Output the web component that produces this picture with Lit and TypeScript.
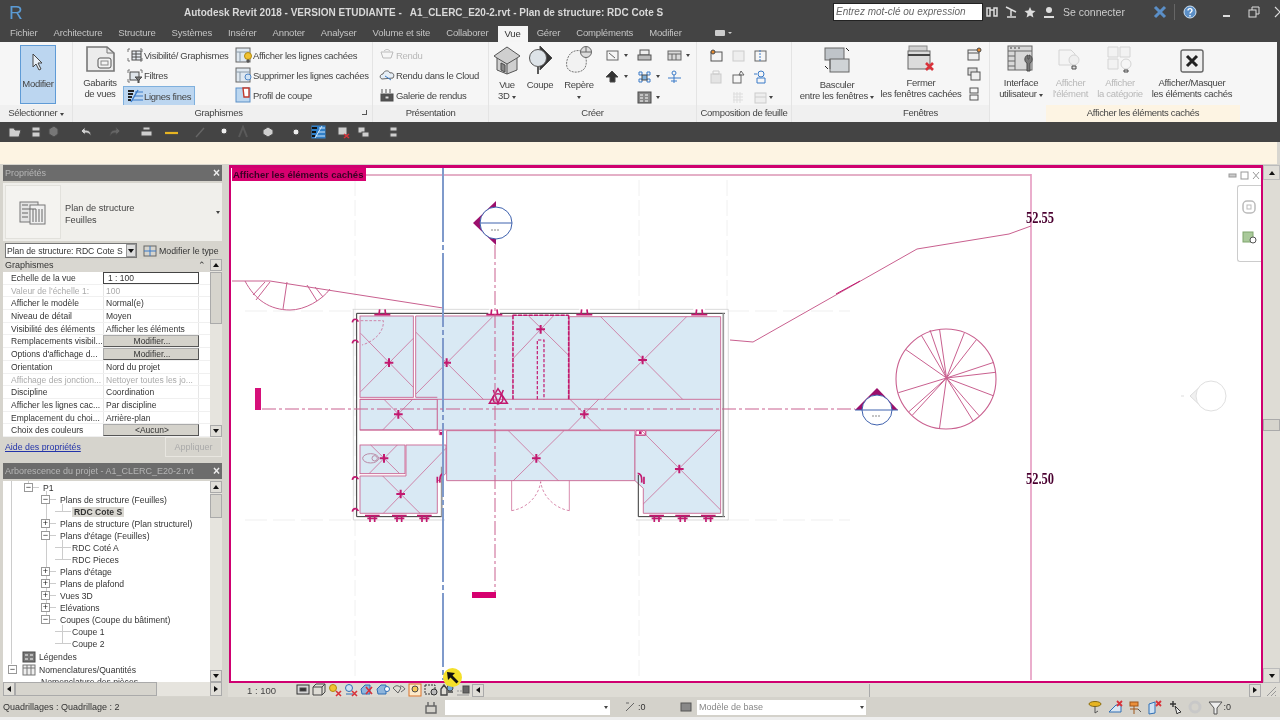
import { LitElement, css, html, svg } from "lit";
import { customElement } from "lit/decorators.js";

const ink = "#4a4a4a";
const red = "#d8323a";
const pink = "#c2186f";
const line = "#c9608f";

// small wrapper so every icon is written the same way
const ico = (w: number, h: number, body: unknown, cls = "") =>
  html`<svg class="ico ${cls}" width=${w} height=${h} viewBox="0 0 ${w} ${h}" fill="none" stroke=${ink} stroke-width="1">${body}</svg>`;

const caret = html`<span class="caret"></span>`;

const icons: Record<string, unknown> = {
  vis: ico(16, 14, svg`<path d="M3 1H1v3M13 1h2v3M3 13H1v-3M13 13h2v-3" stroke="#777"/><rect x="5" y="3" width="9" height="9" fill="#e8edf2"/><path d="M5 6h9M5 9h9M9 3v9"/>`),
  filter: ico(16, 14, svg`<path d="M3 1H1v3M13 1h2v3M3 13H1v-3" stroke="#777"/><rect x="3" y="3" width="9" height="8" fill="#dfe5ea"/><path d="M8 8h7l-3 3v3h-1v-3z" fill="#777"/>`),
  fine: ico(16, 14, svg`<path d="M1 2h6M1 5h5M1 8h4M1 11h3" stroke="#222" stroke-width="1.8"/><path d="M4 13L11 1" stroke="#3a7bc8" stroke-width="1.4"/><path d="M8 3h8M7 7h9M5 11h11" stroke="#3a7bc8"/>`),
  showHidden: ico(18, 16, svg`<rect x="1" y="1" width="14" height="14" fill="#dfe8f0" stroke="#666"/><path d="M1 5h14M5 5v10" stroke="#8a9aa8"/><circle cx="13" cy="9" r="3.5" fill="#f1c232" stroke="#b08a10"/><path d="M12 13h2v2h-2z" fill="#777"/>`),
  hideHidden: ico(18, 16, svg`<rect x="1" y="1" width="14" height="14" fill="#dfe8f0" stroke="#666"/><path d="M1 5h14M5 5v10" stroke="#8a9aa8"/><circle cx="13" cy="10" r="3" fill="#cfe2f3" stroke="#4f86c6"/>`),
  profile: ico(18, 16, svg`<rect x="1" y="1" width="14" height="14" fill="#bcd7f0" stroke="#5b8fc7"/><path d="M8 1h6v9H9z" fill="#fff" stroke="#c0392b" stroke-width="1.4"/>`),
  renderOff: ico(16, 12, svg`<path d="M2 3h12l-2 6H4z" stroke="#bbb"/><path d="M5 2c2-2 4-2 6 0" stroke="#bbb"/>`),
  cloud: ico(16, 14, svg`<path d="M3 11c-3-1-2-5 1-5 1-4 6-4 7-1 3-1 5 2 3 5z" fill="#e6eef6" stroke="#666"/><path d="M6 8l6 4" stroke="#3a7bc8"/>`),
  gallery: ico(16, 14, svg`<path d="M2 2h2M6 2h2M10 2h2M2 4h2M6 4h2M10 4h2" stroke="#555"/><rect x="2" y="6" width="12" height="7" fill="#555"/><rect x="6" y="8" width="4" height="3" fill="#ddd"/>`),
};

const bigIcons: Record<string, unknown> = {
  gabarit: ico(36, 28, svg`<path d="M5 2h20l7 6v18H5z" fill="#ececec" stroke="#777" stroke-width="1.6"/><path d="M25 2v6h7" stroke="#777"/><rect x="16" y="13" width="13" height="10" rx="2" fill="#f4f4f4" stroke="#555"/><rect x="19" y="16" width="7" height="4" stroke="#888"/>`),
  house: ico(28, 30, svg`<path d="M14 2L27 11l-3 2v12l-10 4-10-4V13l-3-2z" fill="#cfcfcf" stroke="#555"/><path d="M4 13l10 6 10-6M14 19v10" stroke="#555"/><path d="M8 18l4 2v7l-4-2z" fill="#888"/>`),
  section: ico(26, 30, svg`<path d="M13 1l12 12-12 12z" fill="#333"/><circle cx="11" cy="13" r="8.5" fill="#dde3e8" stroke="#555"/><path d="M11 22v7" stroke="#333" stroke-width="1.6"/>`),
  callout: ico(28, 30, svg`<path d="M6 8c5-4 12-3 14 2s2 12-2 15-12 3-15-1-1-12 3-16z" stroke="#777" stroke-dasharray="2 1" fill="#f2f2f2"/><circle cx="21" cy="7" r="5.5" fill="#ddd" stroke="#666"/><path d="M16 7h10M21 2v5" stroke="#666"/>`),
  swap: ico(28, 30, svg`<rect x="2" y="3" width="19" height="12" fill="#bfc4c9" stroke="#666"/><rect x="7" y="14" width="19" height="13" fill="#cfd3d6" stroke="#666"/><path d="M7 14v10" stroke="#666"/><path d="M23 3l3 3M2 21l3 3" stroke="#222"/>`),
  close: ico(28, 28, svg`<rect x="2" y="1" width="18" height="12" fill="#d0d0d0" stroke="#888"/><rect x="1" y="6" width="22" height="18" fill="#dcdcdc" stroke="#666"/><path d="M1 10h22" stroke="#444" stroke-width="2"/><path d="M19 18l7 7M26 18l-7 7" stroke=${red} stroke-width="2.6"/>`),
  ui: ico(28, 28, svg`<rect x="1" y="1" width="24" height="24" fill="#d8d8d8" stroke="#666"/><path d="M1 6h24M8 6v19M1 11h7M1 16h7M1 21h7" stroke="#666"/><path d="M3 3h2M7 3h2M11 3h2" stroke="#444"/><path d="M21 10c-4 1-4 7-1 8v8h3v-8c3-1 3-7-1-8v4h-1z" fill="#777"/>`),
  showEl: ico(28, 28, svg`<path d="M2 5h12l4 4v11H2z" stroke="#d4d4d4" fill="#f4f4f4"/><circle cx="17" cy="15" r="5" stroke="#d4d4d4" fill="#efefef"/><path d="M15 21h4v3h-4z" fill="#ddd"/>`),
  showCat: ico(28, 28, svg`<path d="M2 2h10v10H2zM14 2h10v10H14zM2 14h10v10H2z" stroke="#d4d4d4" fill="#f2f2f2"/><circle cx="20" cy="19" r="5" stroke="#d4d4d4"/><path d="M18 25h4v2h-4z" fill="#ddd"/>`),
  toggle: ico(24, 24, svg`<rect x="1" y="1" width="22" height="22" rx="2" fill="#efefef" stroke="#666" stroke-width="1.4"/><path d="M7 7l10 10M17 7L7 17" stroke="#222" stroke-width="3"/>`),
};

// upper area of the "Créer" panel, small icons on three rows; null keeps a cell empty
const createSmall = [
  svg`<rect x="2" y="2" width="11" height="9" stroke="#666"/><path d="M4 4l6 5" stroke="#666"/>`,
  svg`<rect x="3" y="1" width="9" height="5" fill="#eee" stroke="#555"/><rect x="1" y="6" width="13" height="5" fill="#bbb" stroke="#555"/>`,
  svg`<rect x="1" y="2" width="13" height="9" fill="#d8d8d8" stroke="#666"/><path d="M1 5h13M5 5v6M9 5v6" stroke="#666"/>`,
  svg`<path d="M7 1l6 6h-3v5H5V7H1z" fill="#333"/>`,
  svg`<path d="M2 2h3v3H2zM10 2h3v3h-3zM2 9h3v3H2zM10 9h3v3h-3z" stroke="#3a7bc8"/><rect x="5" y="5" width="5" height="5" fill="#7fb0dd"/>`,
  svg`<circle cx="7" cy="3" r="2" stroke="#3a7bc8"/><path d="M1 8h13M7 5v8M4 11h6" stroke="#3a7bc8"/>`,
  null,
  svg`<rect x="1" y="1" width="13" height="11" fill="#888"/><path d="M3 4h3M8 4h3M3 7h3M8 7h3M3 10h3M8 10h3" stroke="#fff"/>`,
];

const compoSmall = [
  svg`<rect x="2" y="3" width="11" height="9" fill="#f4f4f4" stroke="#555"/><circle cx="4" cy="3" r="2" fill="#e58a2e"/>`,
  svg`<rect x="2" y="2" width="11" height="10" fill="#eee" stroke="#ccc"/>`,
  svg`<rect x="2" y="2" width="11" height="10" stroke="#666"/><path d="M7 1v12" stroke="#3a7bc8" stroke-dasharray="2 1"/>`,
  svg`<rect x="2" y="4" width="10" height="9" fill="#e4e4e4" stroke="#ccc"/><path d="M4 1h6v3H4z" stroke="#ccc"/>`,
  svg`<rect x="2" y="5" width="8" height="8" stroke="#666"/><path d="M10 1l3 4h-5z" stroke="#666"/>`,
  svg`<circle cx="8" cy="4" r="3" stroke="#3a7bc8"/><path d="M1 4h3M4 8h8v5H4z" stroke="#3a7bc8"/>`,
  null,
  svg`<path d="M2 3h10M2 6h10M2 9h10M3 1v11M6 1v11M9 1v11" stroke="#ddd"/>`,
  svg`<rect x="2" y="2" width="11" height="10" fill="#eee" stroke="#ccc"/><path d="M2 6h11" stroke="#ccc"/>`,
];

const winSmall = [
  svg`<rect x="1" y="3" width="11" height="10" fill="#eee" stroke="#555"/><path d="M1 6h11" stroke="#555"/><circle cx="12" cy="3" r="2" fill="#e58a2e"/>`,
  svg`<rect x="1" y="1" width="9" height="7" fill="#ddd" stroke="#555"/><rect x="4" y="5" width="9" height="8" fill="#eee" stroke="#555"/>`,
  svg`<rect x="3" y="1" width="8" height="5" stroke="#555"/><rect x="3" y="8" width="8" height="5" stroke="#555"/>`,
];

const tabs = ["Fichier", "Architecture", "Structure", "Systèmes", "Insérer", "Annoter", "Analyser", "Volume et site", "Collaborer", "Vue", "Gérer", "Compléments", "Modifier"];

// [label, value, kind]; kind g = greyed row, b = button cell, i = input cell
const props: [string, string, string?][] = [
  ["Echelle de la vue", "1 : 100", "i"],
  ["Valeur de l'échelle    1:", "100", "g"],
  ["Afficher le modèle", "Normal(e)"],
  ["Niveau de détail", "Moyen"],
  ["Visibilité des éléments", "Afficher les éléments"],
  ["Remplacements visibil...", "Modifier...", "b"],
  ["Options d'affichage d...", "Modifier...", "b"],
  ["Orientation", "Nord du projet"],
  ["Affichage des jonction...", "Nettoyer toutes les jo...", "g"],
  ["Discipline", "Coordination"],
  ["Afficher les lignes cac...", "Par discipline"],
  ["Emplacement du choi...", "Arrière-plan"],
  ["Choix des couleurs", "<Aucun>", "b"],
];

// [depth, box, label, selected]
const tree: [number, string, string, boolean?][] = [
  [1, "-", "P1"],
  [2, "-", "Plans de structure (Feuilles)"],
  [3, "", "RDC Cote S", true],
  [2, "+", "Plans de structure (Plan structurel)"],
  [2, "-", "Plans d'étage (Feuilles)"],
  [3, "", "RDC Coté A"],
  [3, "", "RDC Pieces"],
  [2, "+", "Plans d'étage"],
  [2, "+", "Plans de plafond"],
  [2, "+", "Vues 3D"],
  [2, "+", "Elévations"],
  [2, "-", "Coupes (Coupe du bâtiment)"],
  [3, "", "Coupe 1"],
  [3, "", "Coupe 2"],
];

const viewIcons = [
  svg`<rect x="1" y="2" width="12" height="9" fill="#d5d5d5" stroke="#333"/><rect x="4" y="5" width="6" height="3" fill="#333"/>`,
  svg`<path d="M1 4h9v8H1zM1 4l3-3h9v8l-3 3M10 4l3-3" stroke="#444"/>`,
  svg`<circle cx="5" cy="5" r="3.5" fill="#f1c232" stroke="#b08a10"/><path d="M8 8l5 5M13 8l-5 5" stroke=${red} stroke-width="1.6"/>`,
  svg`<circle cx="5" cy="5" r="3.5" fill="#cfe2f3" stroke="#2f6fb5"/><path d="M2 11h7" stroke="#2f6fb5"/><path d="M8 8l5 5M13 8l-5 5" stroke=${red} stroke-width="1.6"/>`,
  svg`<path d="M1 6l4-4h5v9H2z" fill="#8fb6dd" stroke="#2f6fb5"/><path d="M6 4l6 7M12 4l-6 7" stroke=${red} stroke-width="1.6"/>`,
  svg`<path d="M1 6l4-4h5v9H2z" fill="#8fb6dd" stroke="#2f6fb5"/><circle cx="11" cy="6" r="2.5" fill="#fff" stroke="#2f6fb5"/>`,
  svg`<path d="M1 5c3-3 5-3 8 0l-3 5zM8 3c2 0 4 1 5 3l-4 3" stroke="#666"/>`,
  svg`<rect x="1" y="1" width="12" height="12" fill="#fde9c9" stroke="#d9722a"/><circle cx="7" cy="6" r="3" fill="#f6c75a"/>`,
  svg`<rect x="1" y="2" width="10" height="9" stroke="#333" stroke-dasharray="2 1"/><circle cx="10" cy="9" r="3" fill="#bbb" stroke="#333"/>`,
  svg`<path d="M1 12V6l3-4 3 4v6zM8 9h5" stroke="#444" stroke-width="1.4"/><circle cx="10" cy="5" r="3" fill="#6fa8dc"/>`,
  svg`<path d="M1 8h6" stroke="#999" stroke-dasharray="2 1"/><rect x="7" y="3" width="6" height="7" fill="#666"/><path d="M1 12h12" stroke="#999"/>`,
];

const statusIcons = [
  svg`<ellipse cx="7" cy="4" rx="6" ry="2.5" fill="#e6b422" stroke="#8a6d10"/><path d="M7 6v7l3-2" stroke="#555"/>`,
  svg`<path d="M1 12l7-7h5v7z" fill="#d9e6f2" stroke="#2f6fb5"/><path d="M9 1l5 5M14 1L9 6" stroke=${red} stroke-width="1.8"/>`,
  svg`<rect x="2" y="2" width="8" height="4" fill="#eb8f3a" stroke="#a0561a"/><path d="M6 6v8M2 9h8" stroke="#a0561a"/><path d="M10 9l3 3" stroke="#555"/>`,
  svg`<path d="M1 4l6-2v11l-6 1z" fill="#cfe2f3" stroke="#2f6fb5"/><path d="M8 1l5 5M13 1L8 6" stroke=${red} stroke-width="1.8"/>`,
  svg`<path d="M2 4h6M5 1v6" stroke="#333" stroke-width="1.4"/><path d="M7 6l6 6-3 1-1 1z" fill="#eee" stroke="#333"/>`,
  svg`<circle cx="7" cy="7" r="5" stroke="#c8c8c8" stroke-width="3"/>`,
];

const c = "#cfcfcf";
// quick access bar: [centre x on the page, icon]
const qat: [number, unknown][] = [
  [15, svg`<path d="M1 3h5l1 2h6l-2 7H1z" fill=${c}/>`],
  [36, svg`<rect x="3" y="2" width="8" height="10" fill=${c}/><rect x="3" y="6" width="8" height="1" fill="#444"/>`],
  [53, svg`<path d="M3 4l5-3 4 3v5l-4 3-5-3z" fill="#777"/>`],
  [86, svg`<path d="M2 6l4-4v3c4 0 6 2 6 6-2-3-3-3-6-3v2z" fill=${c}/>`],
  [115, svg`<path d="M12 6L8 2v3c-4 0-6 2-6 6 2-3 3-3 6-3v2z" fill="#666"/>`],
  [146, svg`<rect x="2" y="6" width="11" height="5" fill=${c}/><rect x="4" y="2" width="7" height="3" fill=${c}/>`],
  [171, svg`<path d="M1 8h13" stroke="#e6b422" stroke-width="2.2"/>`],
  [200, svg`<path d="M3 12l8-9" stroke="#666" stroke-width="1.4"/>`],
  [223, svg`<circle cx="8" cy="6" r="3" fill="#eee"/>`],
  [242, svg`<path d="M4 12L8 2l4 10" stroke="#5a5a5a" stroke-width="2"/>`],
  [268, svg`<path d="M7 2l5 3v4l-5 3-5-3V5z" fill=${c}/>`],
  [296, svg`<circle cx="7" cy="7" r="3" fill="#eee"/>`],
  [318, svg`<rect width="15" height="14" fill="#2f7fc8"/><path d="M1 3h5M1 7h4M1 11h3" stroke="#111" stroke-width="1.8"/><path d="M4 13L11 1M8 3h6M7 7h7M5 11h9" stroke="#cfe6fa"/>`],
  [343, svg`<rect x="2" y="2" width="9" height="8" fill=${c}/><path d="M8 9l5 4M13 9l-5 4" stroke=${red} stroke-width="1.6"/>`],
  [363, svg`<rect x="2" y="2" width="7" height="6" fill=${c}/><rect x="6" y="7" width="7" height="5" fill=${c}/>`],
  [393, svg`<rect x="4" y="2" width="7" height="4" fill=${c}/><rect x="4" y="8" width="7" height="4" fill=${c}/>`],
];

const plan = svg`
  <g transform="translate(340 300) scale(.3333)" fill="none">
    <path d="M38 28h410M478 28h240M750 28h310M1095 28h70v632H888M40 28v632h275" stroke="#cfcfcf" stroke-width="2.4"/>
    <g fill="#d9e9f4" stroke=${line} stroke-width="2.6">
      <rect x="60" y="48" width="160" height="244"/>
      <rect x="518" y="46" width="168" height="252"/>
      <rect x="60" y="298" width="232" height="92"/>
      <path d="M320 392H885V542H320z"/>
      <path d="M885 405H918V392H1142V640H910V565L885 542z"/>
      <rect x="60" y="435" width="135" height="86"/>
      <path d="M198 435H318V520L292 545V640H60V528H198z"/>
    </g>
    <path d="M292 298H1142V390H292z" fill="#d9e9f4"/>
    <path d="M227 48H518V298H227zM688 50H1142V298H688z" fill="#d9e9f4"/>
    <path d="M60 298H1142M292 390H1142M292 298V390M60 390H292M688 50V298M227 48V292H292M688 50H1142V390M227 48H518" stroke=${line} stroke-width="2.6"/>
    <g stroke=${line} stroke-width="2.2">
      <path d="M62 100L220 262M62 275L220 115"/>
      <path d="M228 97L430 298M228 282L458 50"/>
      <path d="M566 48L685 165M640 48L520 175"/>
      <path d="M782 50L1028 298M1040 50L792 298"/>
      <path d="M132 298L222 390M218 298L128 390"/>
      <path d="M690 298L782 390M776 298L686 390"/>
      <path d="M505 392L655 542M672 392L520 542"/>
      <path d="M905 392L1142 630M1132 392L910 612"/>
      <path d="M172 435L88 520M92 435L178 520"/>
      <path d="M128 528L240 640M318 445L130 640"/>
      <path d="M515 542V632M688 542V632"/>
      <path d="M515 632C560 625 596 590 602 545M688 632C645 625 608 590 602 545" stroke-dasharray="8 6"/>
      <path d="M62 62H130V70C128 100 100 125 66 135" stroke-dasharray="8 5"/>
    </g>
    <path d="M50 40H445M480 40H1155M50 40V650H305V525M895 525V650H1155" stroke="#333" stroke-width="3"/>
    <path d="M1150 40V650M305 500V650" stroke="#999" stroke-width="5"/>
    <path d="M518 46H686M519 46V298M686 46V298" stroke=${pink} stroke-width="4.5" stroke-dasharray="12 4"/>
    <path d="M592 298V120H612V298" stroke=${pink} stroke-width="3.6" stroke-dasharray="10 5"/>
    <g stroke=${pink} stroke-width="6">
      ${[[147, 188], [320, 188], [602, 88], [908, 180], [175, 343], [733, 343], [589, 475], [1018, 507], [132, 475], [182, 582]].map(
        ([x, y]) => svg`<path d="M${x - 13} ${y}h26M${x} ${y - 13}v26"/>`
      )}
    </g>
    <g stroke=${pink} stroke-width="5">
      ${[[127, 44], [463, 44], [733, 44], [1078, 44]].map(([x, y]) => svg`<path d="M${x - 24} ${y}h48M${x - 10} ${y}l2-16M${x + 10} ${y}l-2-16" />`)}
      ${[[97, 647], [178, 647], [253, 647], [950, 647], [1028, 647], [1105, 647]].map(
        ([x, y]) => svg`<path d="M${x - 22} ${y}h44M${x - 15} ${y + 8}h30M${x - 7} ${y}v19M${x + 7} ${y}v19" />`
      )}
      ${[[48, 62], [48, 125], [48, 535], [48, 630]].map(([x, y]) => svg`<path d="M${x - 11} ${y + 5}c2-12 14-12 18-2" />`)}
      <path d="M300 548c-2-20 4-28 12-28M905 548c2-20-4-28-12-28M292 548V530M912 552V530"/>
      <path d="M298 392v12h12v-12zM888 392v14h28v-14z" stroke-width="2"/>
      <path d="M300 396h8v8h-8zM897 394h8v8h-8z" fill=${pink} stroke="none"/>
    </g>
    <g stroke=${pink} stroke-width="4.5">
      <path d="M448 310L474 266L502 310Z"/>
      <circle cx="474" cy="296" r="15"/>
      <path d="M460 270L474 310L490 270"/>
    </g>
    <g stroke="#b98aa5" stroke-width="3">
      <ellipse cx="92" cy="475" rx="24" ry="14"/>
      <circle cx="104" cy="475" r="8"/>
    </g>
  </g>`;

const treeRays = [[570, 495], [597, 492], [668, 503], [703, 523], [752, 592], [757, 622], [750, 692], [710, 752], [693, 768], [597, 790], [510, 740], [520, 750], [480, 683], [500, 553], [545, 510]];

const drawing = svg`
  <path d="M355 180V680M727 180V310M639 180V310M639 520V680" stroke="#f0f0f0" stroke-dasharray="16 4"/>
  <path d="M245 311H355M727 311H850M245 520H355M727 520H850" stroke="#efefef" stroke-dasharray="22 6"/>
  <path d="M366 175H1031" stroke=${line}/>
  <path d="M1031 174V680" stroke="#e59ac0" stroke-width="1.6"/>
  <path d="M232 281H270L443 308" stroke=${line}/>
  <path d="M245 281C255 300 270 310 290 310C305 310 322 300 330 289M253 295L265 282M256 300L270 282M283 309L287 282M317 301L307 285M323 297L315 287" stroke=${line}/>
  <path d="M730 340L753 342L917 249L1009 234L1031 226" stroke=${line}/>
  <path d="M836 294L860 281" stroke=${pink}/>
  ${plan}
  <path d="M443 168V680" stroke="#7f9acb" stroke-width="2" stroke-dasharray="74 3 5 3"/>
  <path d="M495 245V595" stroke=${line} stroke-dasharray="14 3 3 3"/>
  <path d="M262 409H855" stroke=${line} stroke-dasharray="14 3 3 3"/>
  <path d="M473 223L496 201V245Z" fill="#9c0f6c"/>
  <circle cx="496" cy="223" r="16" fill="#fff" stroke="#3f62ae"/>
  <path d="M480 223H512" stroke="#3f62ae"/>
  <path d="M491 230h9" stroke="#888" stroke-dasharray="2 1"/>
  <path d="M855 410L877 388L898 410Z" fill="#9c0f6c"/>
  <circle cx="877" cy="410" r="15" fill="#fff" stroke="#3f62ae"/>
  <path d="M855 410H898" stroke="#3f62ae"/>
  <path d="M872 416h9" stroke="#888" stroke-dasharray="2 1"/>
  <circle cx="946" cy="379" r="50" fill="#fff" stroke=${line} stroke-width="1.1"/>
  ${treeRays.map(([x, y]) => svg`<path d="M946.5 378L${(730 + x / 2.85).toFixed(1)} ${(165 + y / 3).toFixed(1)}" stroke=${line}/>`)}
  <rect x="255" y="388" width="6" height="22" fill="#d6107a"/>
  <rect x="472" y="592" width="24" height="6" fill="#d6006f"/>
  <path d="M1190 396L1204 383V409Z" fill="#f0f0f0" stroke="#ddd"/>
  <path d="M1181 396h3" stroke="#ddd"/>
  <circle cx="1211" cy="396" r="15" fill="#fff" stroke="#e0e0e0"/>
  <text x="1026" y="223" class="level" textLength="28" lengthAdjust="spacingAndGlyphs">52.55</text>
  <text x="1026" y="484" class="level" textLength="28" lengthAdjust="spacingAndGlyphs">52.50</text>
  <g stroke="#999" fill="none">
    <rect x="1229" y="174" width="7" height="3" fill="#ccc"/>
    <rect x="1241" y="172" width="7" height="7"/>
    <path d="M1253 172l6 7M1259 172l-6 7"/>
  </g>
`;

@customElement("app-root")
export class AppRoot extends LitElement {
  static styles = css`
    :host {
      display: block;
      width: 1280px;
      height: 720px;
      overflow: hidden;
      position: relative;
      background: #d6d4cd;
      font-family: "Liberation Sans", Arial, sans-serif;
      font-size: 10px;
      color: #333;
      filter: blur(0.3px);
    }
    .ico { display: block; flex: none; }
    .caret {
      display: inline-block;
      width: 0;
      height: 0;
      border: 2.5px solid transparent;
      border-top: 3px solid #444;
      border-bottom: 0;
    }

    .title {
      height: 24px;
      background: #444;
      display: grid;
      grid-template-columns: 184px 649px 150px 1fr;
      align-items: center;
      color: #ddd;
    }
    .logo { padding-left: 9px; color: #5b9bd5; font-size: 19px; line-height: 1; }
    .caption { font-weight: bold; font-size: 10px; white-space: pre; color: #d9d9d9; }
    .search {
      height: 16px;
      background: #fff;
      border: 1px solid #222;
      font-style: italic;
      color: #666;
      line-height: 16px;
      padding-left: 2px;
      font-size: 10px;
      white-space: nowrap;
    }
    .tools { display: flex; align-items: center; padding-left: 2px; }
    .tools .login { margin: 0 28px 0 2px; color: #ccc; white-space: nowrap; font-size: 10.5px; }
    .tools .ico { margin-right: 5px; }
    .tools .sep { width: 1px; height: 16px; background: #666; margin: 0 8px 0 2px; }
    .tools .win { margin-left: 9px; }
    .tools .win.first { margin-left: 20px; }

    .tabs {
      height: 18px;
      background: #444;
      display: flex;
      gap: 16px;
      padding-left: 10px;
      align-items: center;
      color: #c4c4c4;
      font-size: 9.5px;
      letter-spacing: -0.15px;
    }
    .tab { line-height: 18px; }
    .tab.on {
      background: #f5f5f5;
      color: #333;
      padding: 0 7px;
      margin: 0 -7px;
      height: 16px;
      align-self: flex-end;
      line-height: 16px;
    }
    .tabs .ico { margin-left: 16px; }

    .ribbon {
      height: 80px;
      display: flex;
      background: #f6f6f6;
      border-right: 3px solid #444;
      box-sizing: border-box;
      font-size: 9.5px;
      letter-spacing: -0.3px;
      color: #444;
    }
    .panel {
      display: flex;
      flex-direction: column;
      flex: none;
      border-right: 1px solid #e4e4e4;
      box-sizing: border-box;
    }
    .panel > .body { height: 63px; display: flex; padding-top: 3px; box-sizing: border-box; }
    .panel > .label {
      height: 17px;
      line-height: 16px;
      text-align: center;
      background: #f0f0f0;
      white-space: nowrap;
      position: relative;
    }
    .p1 { width: 73px; }
    .p2 { width: 300px; }
    .p2 > .label { padding-right: 8px; }
    .p3 { width: 116px; }
    .p4 { width: 208px; }
    .p5 { width: 95px; }
    .p6 { width: 198px; }
    .p6 > .label { padding-left: 60px; }
    .p7 { width: 56px; border: 0; }
    .p8 { width: 194px; border: 0; }
    .p8 > .label { background: #fdf4e3; }
    .p7 > .label { background: none; }
    .launcher { position: absolute; right: 5px; top: 5px; width: 4px; height: 4px; border-right: 1px solid #555; border-bottom: 1px solid #555; }

    .modify {
      width: 36px;
      height: 59px;
      margin-left: 20px;
      background: #bcd6f0;
      border: 1px solid #5f9bd6;
      display: flex;
      flex-direction: column;
      align-items: center;
      gap: 7px;
      padding-top: 7px;
      box-sizing: border-box;
    }
    .big { display: flex; flex-direction: column; align-items: center; text-align: center; line-height: 11px; white-space: nowrap; flex: none; }
    .big .txt { margin-top: 4px; }
    .dim { color: #b8b8b8; }
    .col { display: flex; flex-direction: column; flex: none; }
    .sm { height: 20.5px; display: flex; align-items: center; gap: 1px; white-space: nowrap; }
    .sm.on { background: #bcd6f0; outline: 1px solid #7fb0dd; align-self: flex-start; padding: 0 3px; margin-left: -3px; height: 18px; margin-top: 1px; }
    .gab { width: 40px; margin: 0 6px 0 7px; }
    .c1 { width: 108px; margin-left: 1px; }
    .c2 .sm { gap: 0; }
    .c3 { padding-left: 6px; }
    .c3 .sm { gap: 1px; }
    .vue3d { width: 28px; margin-left: 4px; }
    .coupe { width: 28px; margin-left: 5px; }
    .repere { width: 36px; margin-left: 7px; }
    .grid3 {
      display: grid;
      grid-template-columns: 32px 30px 30px;
      grid-auto-rows: 21px;
      margin-left: 8px;
      align-items: center;
    }
    .grid3 > div { display: flex; align-items: center; gap: 4px; }
    .grid3.compo { grid-template-columns: 22px 22px 22px; margin-left: 12px; }
    .grid3.compo > div { gap: 1px; }
    .bas { width: 74px; margin-left: 8px; }
    .fer { width: 84px; margin-left: 5px; }
    .wins { margin-left: 4px; padding-top: 2px; gap: 6px; }
    .ifc { width: 52px; margin-left: 5px; }
    .a1 { width: 49px; }
    .a2 { width: 50px; }
    .a3 { width: 94px; padding-top: 4px; }

    .qat {
      height: 20px;
      background: #444;
      display: flex;
      align-items: center;
    }
    .options { height: 22px; background: #fdf4e3; border-right: 3px solid #d8d6d0; }

    .main { display: flex; height: 533px; }
    .side { width: 228px; flex: none; padding-left: 3px; box-sizing: border-box; padding-top: 1px; }
    .phead {
      height: 16px;
      width: 219px;
      background: #6c6c6c;
      color: #b5b5b5;
      display: flex;
      justify-content: space-between;
      align-items: center;
      padding: 0 2px 0 2px;
      box-sizing: border-box;
      font-size: 9px;
    }
    .phead b { color: #eee; font-size: 12px; font-weight: bold; }
    .typebox { height: 58px; margin-top: 2px; width: 219px; background: #f0efeb; display: flex; align-items: center; box-sizing: border-box; padding-right: 2px; }
    .thumb { width: 56px; height: 54px; background: #f4f3f0; border: 1px solid #e2e1dc; margin-left: 2px; display: flex; align-items: center; justify-content: center; box-sizing: border-box; }
    .typename { margin-left: 4px; padding-top: 3px; line-height: 12px; flex: 1; font-size: 9.2px; color: #444; }
    .pick { height: 15px; display: flex; margin-top: 2px; width: 219px; padding-left: 2px; box-sizing: border-box; }
    .select { width: 132px; background: #fff; border: 1px solid #777; box-sizing: border-box; display: flex; align-items: center; justify-content: space-between; padding: 0 0 0 1px; white-space: nowrap; font-size: 8.6px; letter-spacing: -0.05px; overflow: hidden; }
    .select i { width: 10px; height: 13px; background: #ddd; border: 1px solid #999; display: flex; align-items: center; justify-content: center; box-sizing: border-box; flex: none; }
    .edit { display: flex; align-items: center; gap: 2px; margin-left: 6px; white-space: nowrap; font-size: 8.8px; color: #333; }
    .table { display: flex; width: 219px; margin-top: 1px; }
    .cells { width: 207px; background: #fff; flex: none; }
    .group { height: 13px; background: #d9d7d1; line-height: 13px; padding-left: 2px; font-size: 9px; display: flex; justify-content: space-between; padding-right: 4px; }
    .row { display: grid; grid-template-columns: 100px 1fr; height: 12.7px; line-height: 12.5px; font-size: 8.5px; border-bottom: 1px solid #f0f0f0; box-sizing: border-box; white-space: nowrap; overflow: hidden; }
    .row > div { padding-left: 8px; overflow: hidden; }
    .row > div + div { padding-left: 2px; width: 96px; border-left: 1px solid #e6e6e6; border-right: 1px solid #e6e6e6; box-sizing: border-box; }
    .row.g { color: #aaa; }
    .row > div.i { border: 1px solid #444; background: #fff; padding-left: 4px; line-height: 10px; }
    .row > div.b { background: #d4d2cb; border: 1px solid #aaa; border-bottom-color: #555; border-right-color: #555; text-align: center; line-height: 10px; }
    .bar { width: 12px; background: #e6e4de; display: flex; flex-direction: column; justify-content: space-between; position: relative; flex: none; }
    .arrow { height: 12px; background: #e0ded8; display: flex; align-items: center; justify-content: center; border: 1px solid #aaa; box-sizing: border-box; }
    .up { width: 0; height: 0; border: 3px solid transparent; border-bottom: 4px solid #111; border-top: 0; }
    .dn { width: 0; height: 0; border: 3px solid transparent; border-top: 4px solid #111; border-bottom: 0; }
    .lf { width: 0; height: 0; border: 3px solid transparent; border-right: 4px solid #111; border-left: 0; }
    .rt { width: 0; height: 0; border: 3px solid transparent; border-left: 4px solid #111; border-right: 0; }
    .knob { position: absolute; left: 0; right: 0; background: #d6d4cd; border: 1px solid #aaa; box-sizing: border-box; }
    .bar .knob { top: 13px; height: 52px; }
    .foot { height: 21px; width: 219px; display: flex; justify-content: space-between; align-items: center; padding-left: 2px; box-sizing: border-box; }
    .foot a { color: #2233aa; text-decoration: underline; font-size: 8.8px; }
    .apply { width: 57px; height: 20px; background: #d6d4cd; border: 1px solid #e8e6e0; color: #aaa; text-align: center; line-height: 18px; font-size: 9px; box-sizing: border-box; }
    .phead.second { margin-top: 5px; }
    .browser { display: flex; width: 219px; height: 201px; background: #fff; margin-top: 2px; overflow: hidden; position: relative; }
    .guides { position: absolute; left: 0; top: 0; }
    .nodes { width: 207px; flex: none; padding: 1px 0 0 2px; box-sizing: border-box; position: relative; }
    .node { height: 12px; display: flex; align-items: center; font-size: 8.6px; white-space: nowrap; color: #333; }
    .d1 { padding-left: 19px; }
    .d2 { padding-left: 36px; }
    .d3 { padding-left: 58px; }
    .d0 { padding-left: 3px; }
    .box { width: 9px; height: 9px; border: 1px solid #999; background: #fff; box-sizing: border-box; display: flex; align-items: center; justify-content: center; font-size: 9px; line-height: 7px; margin-right: 10px; color: #222; flex: none; position: relative; }
    .d1 .box::after, .d2 .box::after { content: ""; position: absolute; left: 8px; top: 3px; width: 6px; border-top: 1px solid #ccc; }
    .stub { width: 16px; border-top: 1px solid #ccc; margin-left: -8px; margin-right: 1px; }
    .node .sel { background: #d9d7d1; font-weight: bold; padding: 0 2px; }
    .hidden { visibility: hidden; }
    .d0 .box { margin-right: 5px; }
    .d0 .ico { margin-right: 3px; }
    .pad { height: 1px; }
    .browser .bar .knob { height: 24px; top: 13px; }
    .hscroll { height: 14px; width: 219px; display: flex; background: #e6e4de; }
    .hscroll .arrow { width: 12px; height: 14px; }
    .hscroll .fill { width: 142px; background: #d6d4cd; border: 1px solid #aaa; box-sizing: border-box; }
    .hscroll .rest { flex: 1; }

    .stage { width: 1052px; flex: none; }
    .upper { display: flex; height: 519px; }
    .canvas {
      width: 1034px;
      flex: none;
      height: 518px;
      margin: 1px 0 0 1px;
      position: relative;
      background: #fff;
      border: 2px solid #cf0070;
      border-top-width: 3px;
      box-sizing: border-box;
    }
    .canvas > svg { position: absolute; left: -2px; top: -3px; }
    .level { font-family: "Liberation Serif", serif; font-size: 16px; font-weight: bold; fill: #4a0030; }
    .tag { position: absolute; left: 1px; top: 0; height: 13px; width: 134px; background: #d8006f; color: #3a0024; font-weight: bold; font-size: 9.5px; line-height: 13px; padding-left: 1px; box-sizing: border-box; white-space: nowrap; overflow: hidden; }
    .nav { position: absolute; right: 0; top: 17px; width: 24px; height: 77px; background: #fff; border: 1px solid #ccc; border-right: 0; border-radius: 3px 0 0 3px; box-sizing: border-box; display: flex; flex-direction: column; align-items: center; gap: 14px; padding-top: 13px; }
    .vscroll { width: 17px; flex: none; background: #dedcd5; display: flex; flex-direction: column; justify-content: space-between; position: relative; margin-top: 1px; }
    .vscroll .arrow { height: 15px; border-color: #bbb; }
    .vscroll .knob { top: 254px; height: 12px; }
    .viewbar { height: 14px; display: flex; align-items: center; background: #dedcd5; }
    .scale { margin-left: 19px; width: 49px; font-size: 9.5px; color: #444; flex: none; }
    .vicons { display: flex; gap: 2px; flex: none; }
    .vthumb { width: 12px; height: 13px; background: #e0ded8; border: 1px solid #aaa; box-sizing: border-box; display: flex; align-items: center; justify-content: center; flex: none; margin-left: 2px; }
    .vtrack { width: 383px; height: 13px; margin-left: 2px; border-right: 1px solid #aaa; flex: none; }
    .vspace { flex: 1; }
    .grip { width: 19px; flex: none; }

    .status { height: 20px; display: flex; align-items: center; background: #d4d2cb; white-space: nowrap; }
    .status .msg { width: 424px; padding-left: 3px; box-sizing: border-box; font-size: 9px; color: #333; flex: none; }
    .field { height: 15px; background: #fff; width: 165px; margin-left: 7px; display: flex; justify-content: flex-end; align-items: center; padding-right: 2px; box-sizing: border-box; flex: none; }
    .zero { display: flex; align-items: center; width: 87px; gap: 2px; padding: 0 5px 0 14px; box-sizing: border-box; flex: none; font-size: 9px; }
    .zero .last { margin-left: auto; }
    .model { width: 169px; height: 15px; background: #fff; display: flex; align-items: center; justify-content: space-between; padding: 0 2px 0 2px; box-sizing: border-box; flex: none; color: #888; font-size: 9px; }
    .sicons { margin-left: auto; display: flex; gap: 5px; align-items: center; padding-right: 49px; font-size: 9px; }
    .sicons span { margin-left: -5px; }
    .strip { height: 3px; background: #eee; }
    .cursor { position: absolute; left: 443px; top: 668px; pointer-events: none; }
  `;

  private renderSmall(list: unknown[], carets: number[], cls = "") {
    return html`<div class="grid3 ${cls}">
      ${list.map((p, i) => html`<div>${p ? ico(15, 14, p) : ""}${carets.includes(i) ? caret : ""}</div>`)}
    </div>`;
  }

  private renderRibbon() {
    return html`<div class="ribbon">
      <div class="panel p1">
        <div class="body">
          <div class="modify">
            ${ico(16, 18, svg`<path d="M3 1v13l3-3 3 6 2-1-3-6h4z" fill="#e8f0f8" stroke="#444"/>`)}
            <span>Modifier</span>
          </div>
        </div>
        <div class="label">Sélectionner ${caret}</div>
      </div>

      <div class="panel p2">
        <div class="body">
          <div class="big gab">${bigIcons.gabarit}<div class="txt">Gabarits<br />de vues</div></div>
          <div class="col c1">
            <div class="sm">${icons.vis}Visibilité/ Graphismes</div>
            <div class="sm">${icons.filter}Filtres</div>
            <div class="sm on">${icons.fine}Lignes fines</div>
          </div>
          <div class="col c2">
            <div class="sm">${icons.showHidden}Afficher les lignes cachées</div>
            <div class="sm">${icons.hideHidden}Supprimer les lignes cachées</div>
            <div class="sm">${icons.profile}Profil de coupe</div>
          </div>
        </div>
        <div class="label">Graphismes<span class="launcher"></span></div>
      </div>

      <div class="panel p3">
        <div class="body">
          <div class="col c3">
            <div class="sm dim">${icons.renderOff}Rendu</div>
            <div class="sm">${icons.cloud}Rendu  dans le Cloud</div>
            <div class="sm">${icons.gallery}Galerie de rendus</div>
          </div>
        </div>
        <div class="label">Présentation</div>
      </div>

      <div class="panel p4">
        <div class="body">
          <div class="big vue3d">${bigIcons.house}<div class="txt">Vue<br />3D ${caret}</div></div>
          <div class="big coupe">${bigIcons.section}<div class="txt">Coupe</div></div>
          <div class="big repere">${bigIcons.callout}<div class="txt">Repère<br />${caret}</div></div>
          ${this.renderSmall(createSmall, [0, 2, 3, 4, 7])}
        </div>
        <div class="label">Créer</div>
      </div>

      <div class="panel p5">
        <div class="body">${this.renderSmall(compoSmall, [8], "compo")}</div>
        <div class="label">Composition de feuille</div>
      </div>

      <div class="panel p6">
        <div class="body">
          <div class="big bas">${bigIcons.swap}<div class="txt">Basculer<br />entre les fenêtres ${caret}</div></div>
          <div class="big fer">${bigIcons.close}<div class="txt">Fermer<br />les fenêtres cachées</div></div>
          <div class="col wins">${winSmall.map((p) => ico(15, 14, p))}</div>
        </div>
        <div class="label">Fenêtres</div>
      </div>

      <div class="panel p7">
        <div class="body">
          <div class="big ifc">${bigIcons.ui}<div class="txt">Interface<br />utilisateur ${caret}</div></div>
        </div>
        <div class="label"></div>
      </div>

      <div class="panel p8">
        <div class="body">
          <div class="big a1 dim">${bigIcons.showEl}<div class="txt">Afficher<br />l'élément</div></div>
          <div class="big a2 dim">${bigIcons.showCat}<div class="txt">Afficher<br />la catégorie</div></div>
          <div class="big a3">${bigIcons.toggle}<div class="txt">Afficher/Masquer<br />les éléments cachés</div></div>
        </div>
        <div class="label">Afficher les éléments cachés</div>
      </div>
    </div>`;
  }

  private renderQat() {
    let end = 0;
    return html`<div class="qat">
      ${qat.map(([x, p]) => {
        const gap = x - 7.5 - end;
        end = x + 7.5;
        return html`<span style="margin-left:${gap}px">${ico(15, 14, p)}</span>`;
      })}
    </div>`;
  }

  private renderProps() {
    return html`
      <div class="phead"><span>Propriétés</span><b>×</b></div>
      <div class="typebox">
        <div class="thumb">
          ${ico(28, 26, svg`<rect x="1" y="3" width="18" height="20" fill="#e4e4e4" stroke="#777"/><rect x="11" y="6" width="15" height="19" fill="#f0f0f0" stroke="#777"/><path d="M3 6h6M3 10h14M3 14h6M3 18h6M14 10v13M17 10v13M20 10v13M23 10v13" stroke="#666"/>`)}
        </div>
        <div class="typename">Plan de structure<br />Feuilles</div>
        ${caret}
      </div>
      <div class="pick">
        <div class="select">Plan de structure: RDC Cote S<i><span class="dn"></span></i></div>
        <div class="edit">
          ${ico(14, 12, svg`<rect x="1" y="1" width="12" height="10" stroke="#666"/><path d="M7 1v10M1 6h12" stroke="#3a7bc8"/>`)}
          Modifier le type
        </div>
      </div>
      <div class="table">
        <div class="cells">
          <div class="group"><span>Graphismes</span><span>⌃</span></div>
          ${props.map(
            ([k, v, kind]) => html`<div class="row ${kind === "g" ? "g" : ""}">
              <div>${k}</div>
              <div class=${kind === "b" || kind === "i" ? kind : ""}>${v}</div>
            </div>`
          )}
        </div>
        <div class="bar">
          <div class="arrow"><span class="up"></span></div>
          <div class="knob"></div>
          <div class="arrow"><span class="dn"></span></div>
        </div>
      </div>
      <div class="foot"><a>Aide des propriétés</a><div class="apply">Appliquer</div></div>`;
  }

  private renderBrowser() {
    return html`
      <div class="phead second"><span>Arborescence du projet - A1_CLERC_E20-2.rvt</span><b>×</b></div>
      <div class="browser">
        <svg class="guides" width="207" height="201" viewBox="3 482 207 201" fill="none">
          <path d="M11.500 482V665M28.500 482V488M46.500 492V620M62.500 505V512M62.500 541V560M62.500 626V644" stroke="#ccc" />
        </svg>
        <div class="nodes">
          ${tree.map(
            ([d, box, label, sel]) => html`<div class="node d${d}">
              ${box ? html`<span class="box">${box === "-" ? "−" : "+"}</span>` : html`<span class="stub"></span>`}
              <span class=${sel ? "sel" : ""}>${label}</span>
            </div>`
          )}
          <div class="pad"></div>
          <div class="node d0"><span class="box hidden"></span>${ico(14, 12, svg`<rect x="1" y="1" width="12" height="10" fill="#777"/><path d="M3 4h3M8 4h3M3 8h3M8 8h3" stroke="#fff"/>`)}Légendes</div>
          <div class="pad"></div>
          <div class="node d0"><span class="box">−</span>${ico(14, 12, svg`<rect x="1" y="1" width="12" height="10" fill="#eee" stroke="#777"/><path d="M1 4h12M5 1v10M9 1v10" stroke="#777"/>`)}Nomenclatures/Quantités</div>
          <div class="node d2">Nomenclature des pièces</div>
        </div>
        <div class="bar">
          <div class="arrow"><span class="up"></span></div>
          <div class="knob"></div>
          <div class="arrow"><span class="dn"></span></div>
        </div>
      </div>
      <div class="hscroll">
        <div class="arrow"><span class="lf"></span></div>
        <div class="fill"></div>
        <div class="rest"></div>
        <div class="arrow"><span class="rt"></span></div>
      </div>`;
  }

  private renderStage() {
    return html`<div class="stage">
      <div class="upper">
        <div class="canvas">
          <svg width="1034" height="518" viewBox="229 165 1034 518" fill="none">${drawing}</svg>
          <div class="tag">Afficher les éléments cachés</div>
          <div class="nav">
            ${ico(18, 18, svg`<rect x="2" y="2" width="12" height="12" rx="4" stroke="#bbb" stroke-width="1.5"/><rect x="6" y="6" width="4" height="4" stroke="#bbb"/>`)}
            ${ico(16, 14, svg`<rect x="1" y="1" width="10" height="10" fill="#a9c99a" stroke="#7fa56c"/><circle cx="11" cy="9" r="3" fill="#fff" stroke="#555"/>`)}
          </div>
        </div>
        <div class="vscroll">
          <div class="arrow"><span class="up"></span></div>
          <div class="knob"></div>
          <div class="arrow"><span class="dn"></span></div>
        </div>
      </div>
      <div class="viewbar">
        <div class="scale">1 : 100</div>
        <div class="vicons">${viewIcons.map((p) => ico(14, 14, p))}</div>
        <div class="vthumb"><span class="lf"></span></div>
        <div class="vtrack"></div>
        <div class="vspace"></div>
        <div class="vthumb"><span class="rt"></span></div>
        <div class="grip">${ico(17, 14, svg`<path d="M6 13L15 4M10 13L15 8M14 13L15 12" stroke="#999"/>`)}</div>
      </div>
    </div>`;
  }

  render() {
    return html`
      <div class="title">
        <div class="logo">R</div>
        <div class="caption">Autodesk Revit 2018 - VERSION ETUDIANTE -   A1_CLERC_E20-2.rvt - Plan de structure: RDC Cote S</div>
        <div class="search">Entrez mot-clé ou expression</div>
        <div class="tools">
          ${ico(14, 14, svg`<path d="M2 3h3v8H2zM9 3h3v8H9zM5 5h4" stroke="#ddd" stroke-width="1.5"/>`)}
          ${ico(14, 14, svg`<path d="M2 2l10 5M7 5v6M3 12h9" stroke="#ddd" stroke-width="1.5"/>`)}
          ${ico(14, 14, svg`<path d="M7 2l1.6 3.6 3.900.4-3 2.600.900 3.800L7 10.500 3.600 12.400l.900-3.800-3-2.600 3.900-.4z" fill="#ddd" stroke="none"/>`)}
          ${ico(14, 14, svg`<circle cx="7" cy="5" r="3" fill="#ddd" stroke="none"/><path d="M2 12h10" stroke="#ddd" stroke-width="2"/>`)}
          <span class="login">Se connecter</span>
          ${ico(14, 14, svg`<path d="M2 2l5 5-5 5M12 2L7 7l5 5" stroke="#5b8fc7" stroke-width="3"/>`)}
          <span class="sep"></span>
          ${ico(14, 14, svg`<circle cx="7" cy="7" r="6" fill="#5b8fc7" stroke="#cfe2f3"/><path d="M5 5.500c0-2.500 4-2.500 4 0 0 1.500-2 1.500-2 3M7 10v1.500" stroke="#fff" stroke-width="1.400"/>`)}
          <span class="win first">${ico(12, 12, svg`<path d="M1 10h7" stroke="#ddd" stroke-width="2"/>`)}</span>
          <span class="win">${ico(12, 12, svg`<rect x="1" y="4" width="7" height="7" stroke="#ddd"/><path d="M4 4V1h7v7H8" stroke="#ddd"/>`)}</span>
          <span class="win">${ico(12, 12, svg`<path d="M1 1l10 10M11 1L1 11" stroke="#ddd" stroke-width="1.200"/>`)}</span>
        </div>
      </div>
      <div class="tabs">
        ${tabs.map((t) => html`<div class="tab ${t === "Vue" ? "on" : ""}">${t}</div>`)}
        ${ico(18, 10, svg`<rect x="1" y="2" width="10" height="6" rx="1" fill="#ccc" stroke="none"/><path d="M14 4l2 2 2-2" fill="#ccc" stroke="none"/>`)}
      </div>
      ${this.renderRibbon()} ${this.renderQat()}
      <div class="options"></div>
      <div class="main">
        <div class="side">${this.renderProps()} ${this.renderBrowser()}</div>
        ${this.renderStage()}
      </div>
      <div class="status">
        <div class="msg">Quadrillages : Quadrillage : 2</div>
        ${ico(14, 14, svg`<path d="M2 6h10v7H2zM4 6V2M10 6V2" stroke="#666" stroke-width="1.400"/>`)}
        <div class="field">${caret}</div>
        <div class="zero">${ico(12, 12, svg`<path d="M2 10l8-8M2 2h3" stroke="#666"/>`)}:0 ${ico(12, 12, svg`<rect x="1" y="2" width="10" height="8" fill="#888" stroke="#555"/>`, "last")}</div>
        <div class="model">Modèle de base${caret}</div>
        <div class="sicons">
          ${statusIcons.map((p) => ico(15, 15, p))}
          ${ico(15, 15, svg`<path d="M1 2h13L9 8v6H6V8z" fill="#eee" stroke="#555"/>`)}<span>:0</span>
        </div>
      </div>
      <div class="strip"></div>
      <svg class="cursor" width="19" height="19" viewBox="0 0 19 19">
        <circle cx="9.500" cy="9.500" r="9.500" fill="#f4e02a" />
        <path d="M4 4l8 1-2.500 2.500 6 6-2 2-6-6L5 12z" fill="#111" />
      </svg>
    `;
  }
}
